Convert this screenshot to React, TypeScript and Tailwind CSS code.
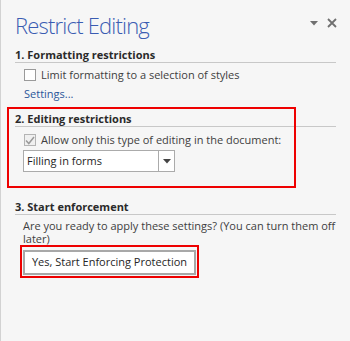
import React from 'react'

const font = { fontFamily: '"Segoe UI", "Open Sans", "Noto Sans", sans-serif' }

const SectionHeader = ({ children }: { children: React.ReactNode }) => (
  <div className="mr-[14px] border-b border-[#c8c8c8] text-[11px] font-bold leading-[14px] text-[#2a2a2a]">
    {children}
  </div>
)

const App: React.FC = () => {
  return (
    <div
      className="h-[341px] w-[350px] overflow-hidden border-l border-[#d2d2d2] bg-[#f6f6f6] pl-[14px]"
      style={font}
    >
      {/* Title */}
      <div className="flex items-start justify-between pt-[12px] pr-[13px]">
        <h1 className="text-[22px] font-light leading-[26px] tracking-[-0.8px] text-[#3a5cb2]">Restrict Editing</h1>
        <div className="mt-[6px] flex items-center gap-[9px]">
          <svg width="8" height="5" viewBox="0 0 8 5">
            <path d="M0 0 L8 0 L4 4.5 Z" fill="#707070" />
          </svg>
          <svg width="10" height="10" viewBox="0 0 10 10">
            <path d="M1 1 L9 9 M9 1 L1 9" stroke="#707070" strokeWidth="1.8" />
          </svg>
        </div>
      </div>

      {/* Section 1 */}
      <div className="mt-[10px]">
        <SectionHeader>1. Formatting restrictions</SectionHeader>
        <label className="mt-[5px] ml-[9px] flex items-center gap-[5px] text-[11px] leading-[14px] text-[#404040]">
          <span className="h-[12px] w-[12px] border border-[#9a9a9a] bg-white" />
          Limit formatting to a selection of styles
        </label>
        <div className="mt-[5px] ml-[9px] text-[11px] leading-[14px] text-[#2b579a]">Settings...</div>
      </div>

      {/* Section 2 */}
      <div className="relative mt-[11px]">
        <div className="pointer-events-none absolute top-[-5px] left-[-8px] h-[81px] w-[289px] border-2 border-[#ee0000]" />
        <SectionHeader>2. Editing restrictions</SectionHeader>
        <label className="mt-[6px] ml-[9px] flex items-center gap-[5px] text-[11px] leading-[14px] text-[#404040]">
          <span className="flex h-[12px] w-[12px] items-center justify-center border border-[#b4b4b4] bg-[#f0f0f0]">
            <svg width="10" height="9" viewBox="0 0 10 9">
              <path d="M1 4.5 L3.8 7.5 L9 1" fill="none" stroke="#9a9a9a" strokeWidth="1.5" />
            </svg>
          </span>
          Allow only this type of editing in the document:
        </label>
        <div className="mt-[3px] ml-[8px] flex h-[22px] w-[152px] border border-[#ababab] bg-white">
          <div className="flex flex-1 items-center pl-[3px] text-[11px] text-[#1e1e1e]">Filling in forms</div>
          <div className="flex w-[16px] items-center justify-center border-l border-[#ababab]">
            <svg width="8" height="5" viewBox="0 0 8 5">
              <path d="M0 0 L8 0 L4 4.5 Z" fill="#444" />
            </svg>
          </div>
        </div>
      </div>

      {/* Section 3 */}
      <div className="mt-[28px]">
        <SectionHeader>3. Start enforcement</SectionHeader>
        <div className="mt-[4px] ml-[8px] pr-[10px] text-[11px] leading-[13px] text-[#404040]">
          Are you ready to apply these settings? (You can turn them off later)
        </div>
        <div className="ml-[5px] inline-block border-2 border-[#ee0000] p-[1px]">
          <button className="h-[25px] w-[173px] border-2 border-[#a8a8a8] bg-white text-[11px] leading-[16px] text-[#262626]">
            Yes, Start Enforcing Protection
          </button>
        </div>
      </div>
    </div>
  )
}

export default App
